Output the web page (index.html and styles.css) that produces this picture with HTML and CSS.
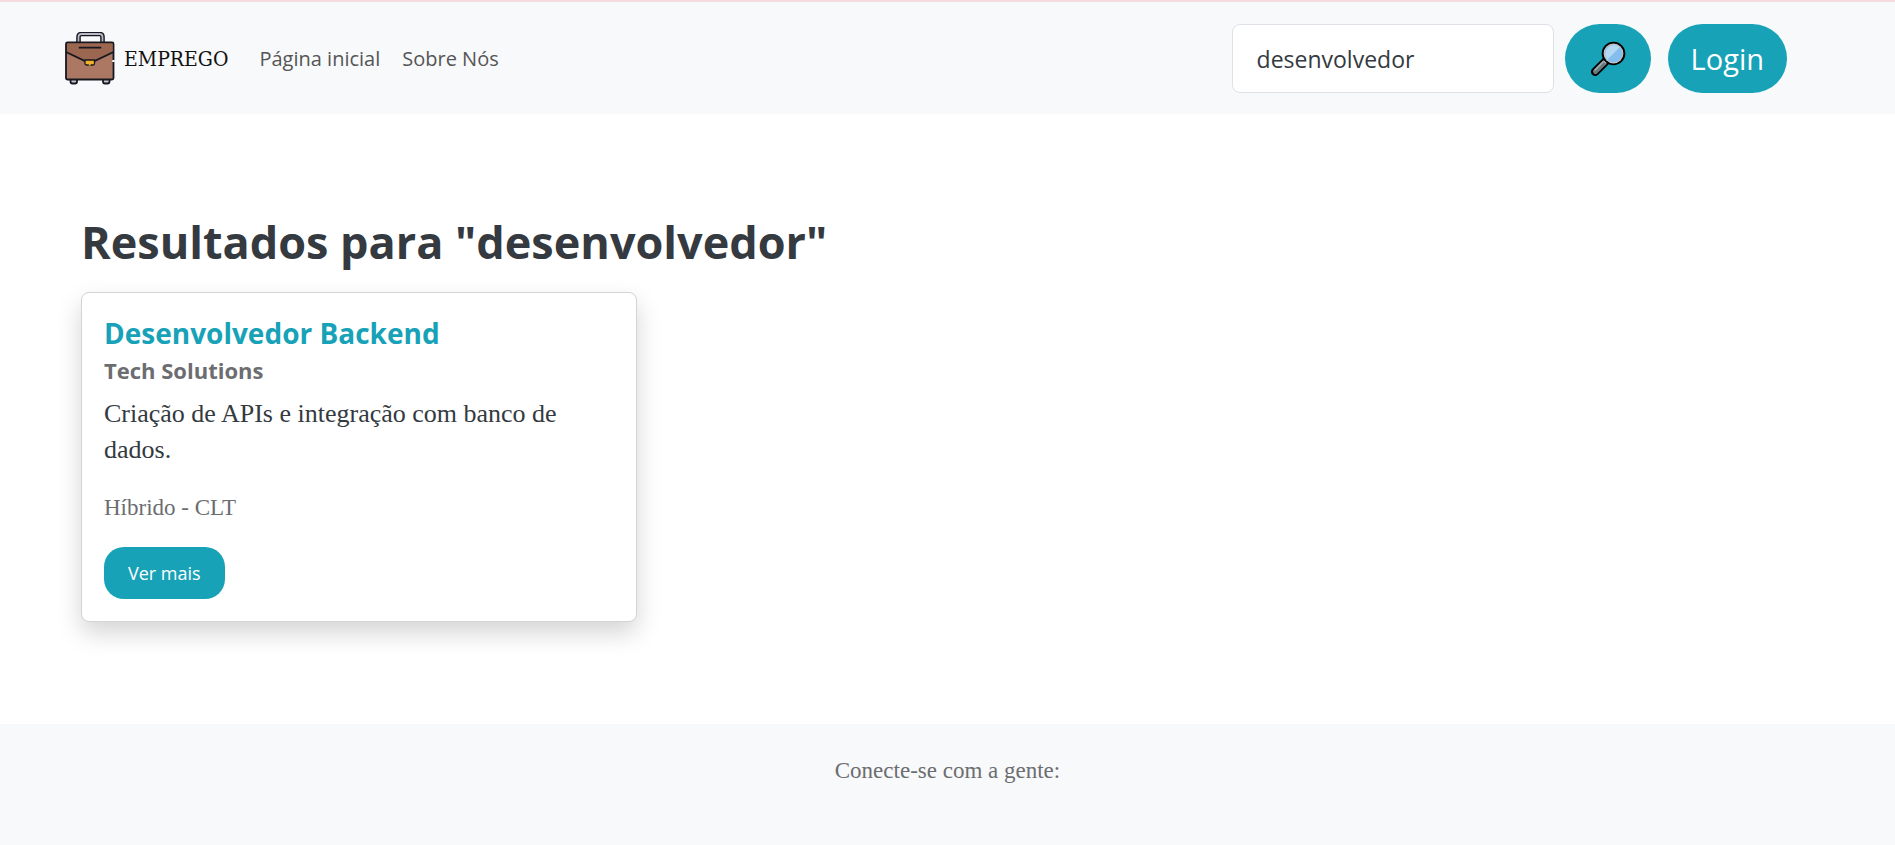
FILE: index.html
```html
<!DOCTYPE html>
<html lang="pt-BR">
<head>
<meta charset="utf-8">
<meta name="viewport" content="width=device-width, initial-scale=1">
<title>Emprego - Resultados</title>
<link rel="stylesheet" href="styles.css">
</head>
<body class="page">
<header class="navbar">
  <a class="brand" href="#">
    <svg class="brand-icon" viewBox="0 0 50 54" aria-hidden="true">
      <path d="M13.500 11V5q0-3 3-3h18q3 0 3 3v6" fill="none" stroke="#17171f" stroke-width="4.600"/>
      <path d="M13.500 11V5q0-3 3-3h18q3 0 3 3v6" fill="none" stroke="#b9bac8" stroke-width="1.800"/>
      <path d="M5.500 47v2.500q0 2 2 2h2.500q2 0 2-2V47M38 47v2.500q0 2 2 2h2.500q2 0 2-2V47" fill="#c3c4cf" stroke="#17171f" stroke-width="1.800"/>
      <rect x="1" y="10.500" width="47.500" height="37" rx="1.500" fill="#ac7863" stroke="#17171f" stroke-width="1.800"/>
      <path d="M2 11.500h45.500v8.500L29 29h-9L2 20z" fill="#9c6751"/>
      <path d="M1 20l19 9h9.500l19-9" fill="none" stroke="#17171f" stroke-width="1.800"/>
      <path d="M14.500 15.700h21" stroke="#17171f" stroke-width="1.800" stroke-linecap="round"/>
      <path d="M20 28h9.500v3.500q0 1.500-1.500 1.500h-6.500q-1.500 0-1.500-1.500z" fill="#f3b229" stroke="#17171f" stroke-width="1.300"/>
      <path d="M24.700 31v2.500" stroke="#f3b229" stroke-width="1.800"/>
      <path d="M48.500 28v2" stroke="#f8f9fa" stroke-width="2.500"/>
    </svg>
    <span class="brand-name">EMPREGO</span>
  </a>
  <nav class="nav-links">
    <a class="nav-link" href="#">Página inicial</a>
    <a class="nav-link" href="#">Sobre Nós</a>
  </nav>
  <form class="search">
    <input class="search-input" type="text" aria-label="Buscar vagas" value="desenvolvedor">
    <button class="pill search-button" type="button" aria-label="Buscar">
      <svg class="search-icon" viewBox="0 0 36 36" aria-hidden="true">
        <path d="M5.200 30.800L15.500 20.500" stroke="#000" stroke-width="8.500" stroke-linecap="round"/>
        <path d="M15 21l4-4" stroke="#000" stroke-width="5"/>
        <path d="M5.500 30.500L14.500 21.500" stroke="#69797e" stroke-width="5" stroke-linecap="round"/>
        <path d="M5 29L13 21" stroke="#a5adb0" stroke-width="1.600" stroke-linecap="round"/>
        <path d="M14.500 21.500l3.500-3.500" stroke="#cbcbcb" stroke-width="2.500"/>
        <circle cx="23.500" cy="12.500" r="11.800" fill="#000"/>
        <circle cx="23.500" cy="12.500" r="9.900" fill="#c5c2c5"/>
        <circle cx="23.500" cy="12.500" r="8.800" fill="#83beec"/>
        <path d="M17.300 18.700A8.800 8.800 0 0 1 29.700 6.300z" fill="#b3d8f3"/>
      </svg>
    </button>
  </form>
  <a class="pill login" href="#">Login</a>
</header>

<main class="results">
  <h1 class="results-title">Resultados para "desenvolvedor"</h1>
  <div class="job-grid">
    <article class="job-card">
      <h2 class="job-title">Desenvolvedor Backend</h2>
      <h3 class="job-company">Tech Solutions</h3>
      <p class="job-text">Criação de APIs e integração com banco de dados.</p>
      <p class="job-meta">Híbrido - CLT</p>
      <a class="job-more" href="#">Ver mais</a>
    </article>
  </div>
</main>

<footer class="footer">
  <p class="footer-text">Conecte-se com a gente:</p>
</footer>
</body>
</html>
```
FILE: styles.css
```css
* {
  box-sizing: border-box;
}

.page {
  display: flex;
  flex-direction: column;
  min-height: 100vh;
  margin: 0;
  background: #fff;
  color: #343a40;
  font-family: "Open Sans", "Noto Sans", sans-serif;
}

.navbar {
  display: flex;
  align-items: center;
  padding: 22px 108px 21px 65px;
  border-top: 2px solid #f5dce0;
  background: #f8f9fb;
}

.brand {
  display: flex;
  align-items: center;
  gap: 9px;
  color: #111;
  text-decoration: none;
}

.brand-icon {
  width: 50px;
  height: 54px;
}

.brand-name {
  font-family: "DejaVu Serif Condensed", "DejaVu Serif", serif;
  font-size: 21px;
  line-height: 28px;
}

.nav-links {
  display: flex;
  gap: 22px;
  margin-left: 31px;
}

.nav-link {
  color: #555;
  font-size: 20px;
  line-height: 28px;
  text-decoration: none;
}

.search {
  display: flex;
  gap: 11px;
  margin-left: auto;
}

.search-input {
  width: 322px;
  height: 69px;
  padding: 0 24px;
  border: 1px solid #dee2e6;
  border-radius: 8px;
  background: #fff;
  color: #343a40;
  font-family: inherit;
  font-size: 23px;
}

.pill {
  display: flex;
  align-items: center;
  justify-content: center;
  height: 69px;
  border: 0;
  border-radius: 35px;
  background: #17a2b8;
  color: #fff;
}

.search-button {
  width: 86px;
  padding: 0;
}

.search-icon {
  width: 36px;
  height: 36px;
}

.login {
  margin-left: 17px;
  padding: 0 23px;
  font-size: 29px;
  text-decoration: none;
}

.results {
  padding: 96px 81px 102px;
}

.results-title {
  margin: 0 0 18px;
  font-size: 45px;
  font-weight: 700;
  line-height: 64px;
}

.job-grid {
  display: grid;
  grid-template-columns: repeat(3, 1fr);
  gap: 32px;
}

.job-card {
  padding: 22px;
  border: 1px solid #d3d4d5;
  border-radius: 8px;
  background: #fff;
  box-shadow: 0 11px 24px rgba(0, 0, 0, 0.17);
}

.job-title {
  margin: 0;
  color: #17a2b8;
  font-size: 28px;
  line-height: 37px;
}

.job-company {
  margin: 0 0 8px;
  color: #6c6d70;
  font-size: 22px;
  line-height: 36px;
}

.job-text {
  margin: 0 0 22px;
  font-family: "Liberation Serif", serif;
  font-size: 26px;
  line-height: 36px;
}

.job-meta {
  margin: 0 0 22px;
  color: #6c6d70;
  font-family: "Liberation Serif", serif;
  font-size: 23px;
  line-height: 35px;
}

.job-more {
  display: inline-flex;
  align-items: center;
  height: 52px;
  padding: 0 24px;
  border-radius: 20px;
  background: #17a2b8;
  color: #fff;
  font-size: 18px;
  text-decoration: none;
}

.footer {
  flex: 1;
  padding: 32px 24px;
  background: #f8f9fb;
  text-align: center;
}

.footer-text {
  margin: 0;
  color: #6c6d70;
  font-family: "Liberation Serif", serif;
  font-size: 23px;
  line-height: 30px;
}
```
